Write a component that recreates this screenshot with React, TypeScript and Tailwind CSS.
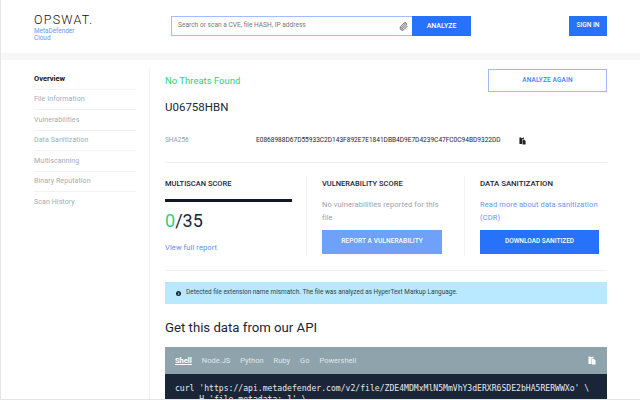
import { Paperclip } from "lucide-react";

const navItems = ["File Information", "Vulnerabilities", "Data Sanitization", "Multiscanning", "Binary Reputation", "Scan History"];
const langs = ["Node.JS", "Python", "Ruby", "Go", "Powershell"];

function CopyIcon({ className }: { className: string }) {
  return (
    <svg viewBox="0 0 16 18" className={className} fill="currentColor">
      <path d="M1 1h4v1h4V1h2v4H7v11H1z" />
      <path d="M8 6h4l3 3v8H8z" />
    </svg>
  );
}

export default function App() {
  return (
    <div className="h-[400px] w-[640px] overflow-hidden bg-white border-l border-b border-[#e4e4e4] font-['Roboto',sans-serif]">
      {/* Header */}
      <header className="h-[53px] flex items-start pl-[33px] pr-[32px] pt-[16px] bg-white">
        <div className="w-[137px] -mt-[3px]">
          <div className="text-[12.5px] leading-[14px] tracking-[1.25px] font-light text-[#111]">OPSWAT.</div>
          <div className="mt-[1px] text-[6.4px] leading-[7px] text-[#6b95f5]">MetaDefender</div>
          <div className="text-[6.4px] leading-[7px] text-[#6b95f5]">Cloud</div>
        </div>
        <div className="flex h-[20px] w-[300px]">
          <div className="flex-1 flex items-center justify-between border border-r-0 border-[#a3bcfa] pl-[6px] pr-[4px]">
            <span className="text-[6.6px] text-[#777]">Search or scan a CVE, file HASH, IP address</span>
            <Paperclip className="w-[9px] h-[9px] text-[#555]" strokeWidth={2.5} />
          </div>
          <button className="w-[59px] bg-[#2672fb] text-white text-[7px] font-medium">ANALYZE</button>
        </div>
        <button className="ml-[98px] w-[38px] h-[20px] bg-[#2672fb] text-white text-[6.5px] font-medium">SIGN IN</button>
      </header>
      <div className="h-[7px] bg-[#f7f7f7]" />

      <div className="flex">
        {/* Sidebar */}
        <aside className="w-[149px] mt-[7px] pl-[33px] pr-[13px] pt-[2px] h-[340px] border-r border-[#f2f2f2]">
          <div className="h-[20.5px] flex items-center text-[7.5px] font-bold text-[#111] border-b border-[#f2f2f2]">Overview</div>
          {navItems.map((item, i) => (
            <div
              key={item}
              className={`h-[20.5px] flex items-center text-[7px] tracking-[0.1px] text-[#a3abb6] ${i < navItems.length - 1 ? "border-b border-[#f2f2f2]" : ""}`}
            >
              {item}
            </div>
          ))}
        </aside>

        {/* Main */}
        <main className="w-[442px] ml-[15px] pt-[9px]">
          <div className="flex items-center justify-between h-[23px]">
            <span className="pt-[1px] text-[9.5px] text-[#2fd07f]">No Threats Found</span>
            <button className="w-[119px] h-[23px] border border-[#9db9fb] text-[#3f7ffb] text-[6.5px] font-medium tracking-[0.15px]">ANALYZE AGAIN</button>
          </div>
          <div className="mt-[7px] text-[11.5px] leading-[16px] text-[#1d2535]">U06758HBN</div>
          <div className="mt-[19px] flex items-center h-[14px] pb-[1px]">
            <span className="w-[91px] text-[6.5px] text-[#8d9db0]">SHA256</span>
            <span className="w-[263px] text-[6.55px] text-[#1d2535]">E0868988D67D55933C2D143F892E7E1841DBB4D9E7D4239C47FC0C94BD9322DD</span>
            <CopyIcon className="w-[7px] h-[8px] text-[#222]" />
          </div>
          <div className="mt-[14px] border-t border-[#f0f0f0]" />

          {/* Scores */}
          <div className="flex h-[108px] pt-[13px] border-b border-[#f0f0f0]">
            <div className="w-[142px] h-[80px] pt-[1px] border-r border-[#f2f2f2]">
              <div className="text-[7.5px] leading-[14px] font-medium text-[#1d2535]">MULTISCAN SCORE</div>
              <div className="mt-[8px] w-[127px] h-[3px] bg-[#111827]" />
              <div className="mt-[8px] text-[18px] leading-[22px] text-[#1d2535]">
                <span className="text-[#2fd07f]">0</span>/35
              </div>
              <div className="mt-[10px] text-[7.5px] tracking-[0.1px] text-[#5d8df5]">View full report</div>
            </div>
            <div className="w-[158px] h-[80px] pt-[1px] pl-[15px] pr-[18px] border-r border-[#f2f2f2]">
              <div className="text-[7.5px] leading-[14px] font-medium text-[#1d2535]">VULNERABILITY SCORE</div>
              <div className="mt-[7px] text-[7.5px] leading-[13px] tracking-[0.1px] text-[#9aa3ad]">No vulnerabilities reported for this file</div>
              <button className="mt-[6px] w-[120px] h-[24px] bg-[#6fa0fa] text-white text-[6.5px] font-medium tracking-[0.1px]">REPORT A VULNERABILITY</button>
            </div>
            <div className="flex-1 pt-[1px] pl-[15px] pr-[8px]">
              <div className="text-[7.8px] leading-[14px] font-medium text-[#1d2535]">DATA SANITIZATION</div>
              <div className="mt-[7px] text-[7.5px] leading-[13px] tracking-[0.1px] text-[#6b95f5]">Read more about data sanitization (CDR)</div>
              <button className="mt-[6px] w-[119px] h-[24px] bg-[#2672fb] text-white text-[6.5px] font-medium">DOWNLOAD SANITIZED</button>
            </div>
          </div>

          {/* Alert */}
          <div className="mt-[11px] h-[22px] bg-[#b9e9ff] flex items-center pl-[11px] gap-[5px] text-[6.45px] text-[#33424f]">
            <span className="w-[5px] h-[5px] rounded-full bg-[#1d2535] text-white text-[4px] leading-[5px] text-center font-bold">i</span>
            <span>Detected file extension name mismatch. The file was analyzed as HyperText Markup Language.</span>
          </div>

          <h2 className="mt-[14px] text-[13.2px] leading-[20px] text-[#1d2535]">Get this data from our API</h2>

          {/* Code */}
          <div className="mt-[9px]">
            <div className="h-[27px] bg-[#8fa3ad] flex items-center pl-[10px] pr-[11px] gap-[10px] text-[7.5px] text-[#dfe6ea]">
              <span className="font-bold text-white underline">Shell</span>
              {langs.map((l) => (
                <span key={l}>{l}</span>
              ))}
              <CopyIcon className="ml-auto w-[8px] h-[9px] text-white" />
            </div>
            <div className="h-[40px] bg-[#1a2538] pl-[10px] pt-[9px] font-['DejaVu_Sans_Mono',monospace] text-[8.1px] leading-[11px] text-[#e6e9ee] whitespace-pre">
              {"curl 'https://api.metadefender.com/v2/file/ZDE4MDMxMlN5MmVhY3dERXR6SDE2bHA5RERWWXo' \\\n    -H 'file_metadata: 1' \\"}
            </div>
          </div>
        </main>
      </div>
    </div>
  );
}
